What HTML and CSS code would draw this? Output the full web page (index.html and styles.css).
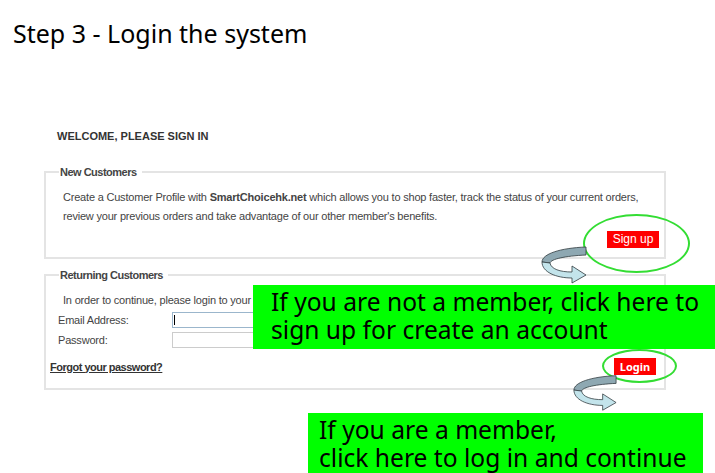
FILE: index.html
```html
<!DOCTYPE html>
<html lang="en">
<head>
  <meta charset="UTF-8" />
  <meta name="viewport" content="width=device-width, initial-scale=1" />
  <title>Step 3 - Login the system</title>
  <link rel="stylesheet" href="styles.css">
</head>
<body>
<div class="page">

  <h1 class="step-title">Step 3 - Login the system</h1>

  <div class="login-box">
    <h2 class="welcome">WELCOME, PLEASE SIGN IN</h2>

    <fieldset class="group group-new">
      <legend>New Customers</legend>
      <p class="intro">
        <span class="line">Create a Customer Profile with <b>SmartChoicehk.net</b> which allows you to shop faster, track the status of your current orders,</span>
        <span class="line">review your previous orders and take advantage of our other member's benefits.</span>
      </p>
      <div class="actions">
        <span class="btn btn-signup">Sign up</span>
      </div>
    </fieldset>

    <fieldset class="group group-return">
      <legend>Returning Customers</legend>
      <p class="intro intro-short">In order to continue, please login to your</p>
      <div class="field">
        <label>Email Address:</label>
        <span class="input input-focus"><span class="caret"></span></span>
      </div>
      <div class="field">
        <label>Password:</label>
        <span class="input"></span>
      </div>
      <div class="login-row">
        <a class="forgot" href="#">Forgot your password?</a>
        <span class="btn btn-login">Login</span>
      </div>
    </fieldset>
  </div>

  <!-- annotations drawn over the screenshot -->
  <div class="ring ring-signup"></div>
  <div class="ring ring-login"></div>

  <svg class="turn-arrow arrow-signup" viewBox="0 0 48 40" width="48" height="40">
    <path d="M46,3 C20,4 2,10 2,18 L10,19 C11,15 25,12 46,11 Z" fill="#8ea8b2" stroke="#2f3a3e" stroke-width="0.8"/>
    <path d="M2,18 C2,28 16,34 32,34 L32,39 L46,31 L32,22 L32,28 C20,28 11,25 10,19 Z" fill="#c3e4eb" stroke="#2f3a3e" stroke-width="0.8"/>
  </svg>
  <svg class="turn-arrow arrow-login" viewBox="0 0 48 40" width="46" height="40">
    <path d="M46,3 C20,4 2,10 2,18 L10,19 C11,15 25,12 46,11 Z" fill="#8ea8b2" stroke="#2f3a3e" stroke-width="0.8"/>
    <path d="M2,18 C2,28 16,34 32,34 L32,39 L46,31 L32,22 L32,28 C20,28 11,25 10,19 Z" fill="#c3e4eb" stroke="#2f3a3e" stroke-width="0.8"/>
  </svg>

  <div class="callout callout-signup">
    <span class="callout-line">If you are not a member, click here to</span>
    <span class="callout-line">sign up for create an account</span>
  </div>
  <div class="callout callout-login">
    <span class="callout-line">If you are a member,</span>
    <span class="callout-line">click here to log in and continue</span>
  </div>

</div>
</body>
</html>
```

FILE: styles.css
```css
body {
  margin: 0;
  padding: 0;
  background: #fff;
  overflow: hidden;
}
.page {
  position: relative;
  width: 715px;
  height: 473px;
}
.step-title {
  margin: 0;
  padding: 17px 0 0 13px;
  font-family: "Noto Sans", sans-serif;
  font-weight: normal;
  font-size: 25px;
  line-height: 32px;
  color: #000;
}
.login-box {
  margin: 80px 0 0 44px;
  width: 622px;
  font-family: "Liberation Sans", Arial, sans-serif;
  font-size: 11px;
  letter-spacing: -0.2px;
  color: #444;
}
.welcome {
  margin: 0 0 22px 13px;
  font-size: 11px;
  font-weight: bold;
  letter-spacing: 0;
  color: #333;
  line-height: 14px;
}
.group {
  margin: 0;
  padding: 0 5px 0 5px;
  border: 2px solid #e4e4e4;
  min-width: 0;
}
.group legend {
  margin-left: 8px;
  padding: 0 5px 0 1px;
  font-weight: bold;
  letter-spacing: -0.5px;
  color: #444;
  line-height: 14px;
}
.intro {
  margin: 9px 0 0 12px;
  line-height: 19px;
  color: #444;
}
.intro .line {
  display: block;
  white-space: nowrap;
}
.actions {
  display: flex;
  justify-content: flex-end;
  padding: 5px 0 9px;
}
.btn {
  display: inline-block;
  background: #f00;
  color: #fff;
  text-align: center;
  letter-spacing: 0;
}
.btn-signup {
  width: 52px;
  height: 17px;
  line-height: 17px;
  font-size: 12px;
}
.group-new {
  height: 90px;
  margin-bottom: 9px;
}
.group-return {
  height: 118px;
}
.intro-short {
  margin-top: 12px;
  white-space: nowrap;
  line-height: 13px;
}
.field {
  display: flex;
  align-items: center;
  margin: 5px 0 0 7px;
  height: 16px;
}
.field + .field {
  margin-top: 4px;
}
.field label {
  width: 114px;
  color: #444;
}
.input {
  display: block;
  position: relative;
  width: 200px;
  height: 14px;
  border: 1px solid #ccc;
  background: #fff;
}
.input-focus {
  border-color: #9bb6cc;
}
.caret {
  position: absolute;
  left: 1px;
  top: 2px;
  width: 1px;
  height: 10px;
  background: #000;
}
.login-row {
  display: flex;
  justify-content: space-between;
  align-items: center;
  margin-top: 10px;
  padding-right: 3px;
}
.forgot {
  margin-left: -1px;
  color: #333;
  font-weight: bold;
  letter-spacing: -0.5px;
  text-decoration: underline;
}
.btn-login {
  width: 42px;
  height: 17px;
  line-height: 17px;
  font-size: 11px;
  font-weight: bold;
  font-family: "Noto Sans", sans-serif;
}
.ring {
  position: absolute;
  border: 2px solid #33dd33;
  border-radius: 50%;
  box-sizing: border-box;
}
.ring-signup {
  left: 583px;
  top: 214px;
  width: 107px;
  height: 59px;
}
.ring-login {
  left: 602px;
  top: 349px;
  width: 75px;
  height: 34px;
}
.turn-arrow {
  position: absolute;
}
.arrow-signup {
  left: 540px;
  top: 244px;
}
.arrow-login {
  left: 572px;
  top: 372px;
}
.callout {
  position: absolute;
  box-sizing: border-box;
  background: #00ff00;
  color: #000;
  font-family: "Noto Sans", sans-serif;
  font-size: 24.6px;
  white-space: nowrap;
}
.callout-line {
  display: block;
  height: 28px;
  line-height: 28px;
}
.callout-signup {
  left: 253px;
  top: 285px;
  width: 462px;
  height: 64px;
  padding: 3px 0 0 18px;
}
.callout-login {
  left: 308px;
  top: 413px;
  width: 395px;
  height: 60px;
  padding: 3px 0 0 11px;
}
```
